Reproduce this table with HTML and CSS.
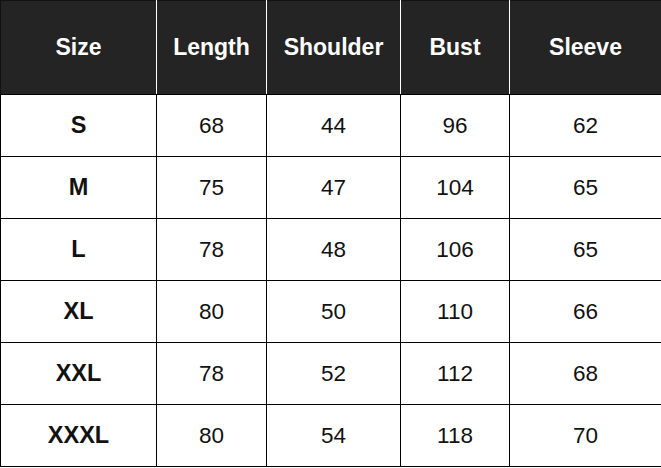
FILE: index.html
```html
<!DOCTYPE html>
<html>
<head>
<meta charset="utf-8">
<link rel="stylesheet" href="styles.css">
</head>
<body>
<table class="size-table">
  <colgroup>
    <col class="c1"><col class="c2"><col class="c3"><col class="c4"><col class="c5">
  </colgroup>
  <thead>
    <tr class="head">
      <th>Size</th><th>Length</th><th>Shoulder</th><th>Bust</th><th>Sleeve</th>
    </tr>
  </thead>
  <tbody>
    <tr><td class="sz">S</td><td>68</td><td>44</td><td>96</td><td>62</td></tr>
    <tr><td class="sz">M</td><td>75</td><td>47</td><td>104</td><td>65</td></tr>
    <tr><td class="sz">L</td><td>78</td><td>48</td><td>106</td><td>65</td></tr>
    <tr><td class="sz">XL</td><td>80</td><td>50</td><td>110</td><td>66</td></tr>
    <tr><td class="sz">XXL</td><td>78</td><td>52</td><td>112</td><td>68</td></tr>
    <tr><td class="sz">XXXL</td><td>80</td><td>54</td><td>118</td><td>70</td></tr>
  </tbody>
</table>
</body>
</html>
```
FILE: styles.css
```css
html, body {
  margin: 0;
  padding: 0;
  background: #ffffff;
}
.size-table {
  border-collapse: collapse;
  table-layout: fixed;
  width: 661px;
  font-family: "Liberation Sans", Arial, sans-serif;
  font-size: 22.5px;
  color: #111;
}
.c1 { width: 156px; }
.c2 { width: 110px; }
.c3 { width: 134px; }
.c4 { width: 109px; }
.c5 { width: 152px; }
.size-table th,
.size-table td {
  border: 1px solid #000;
  text-align: center;
  vertical-align: middle;
  padding: 0;
}
.head {
  height: 94px;
  background: #242424;
}
.size-table th {
  color: #fff;
  font-size: 23px;
  font-weight: bold;
  border-left-color: #fff;
  border-right-color: #fff;
  border-top-color: #111;
}
.size-table th:first-child { border-left-color: #111; }
.size-table th:last-child { border-right-color: #111; }
.size-table tbody tr { height: 62px; }
.sz { font-weight: bold; font-size: 23.5px; }
```
